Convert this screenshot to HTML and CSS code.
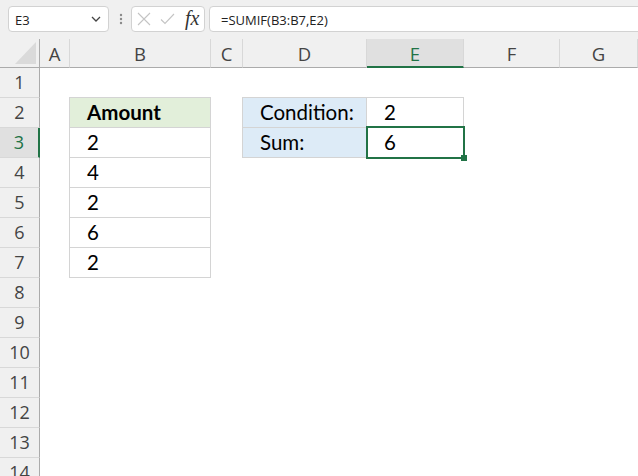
FILE: index.html
```html
<!DOCTYPE html>
<html>
<head>
<meta charset="utf-8">
<link rel="stylesheet" href="styles.css">
</head>
<body>
<div class="app">
  <div class="toolbar">
    <div class="namebox">
      <span class="name">E3</span>
      <svg class="chev" width="10" height="6" viewBox="0 0 10 6"><path d="M1 1 L5 5 L9 1" fill="none" stroke="#444" stroke-width="1.3"/></svg>
    </div>
    <svg class="dots" width="4" height="12" viewBox="0 0 4 12"><circle cx="2" cy="2" r="1.2" fill="#8a8a8a"/><circle cx="2" cy="6" r="1.2" fill="#8a8a8a"/><circle cx="2" cy="10" r="1.2" fill="#8a8a8a"/></svg>
    <div class="fxbox">
      <svg class="ico" width="14" height="14" viewBox="0 0 14 14"><path d="M1 1 L13 13 M13 1 L1 13" stroke="#c4c4c4" stroke-width="1.1" fill="none"/></svg>
      <svg class="ico" width="15" height="12" viewBox="0 0 15 12"><path d="M1 6.5 L5 10.5 L14 1" stroke="#c4c4c4" stroke-width="1.1" fill="none"/></svg>
      <span class="fx">fx</span>
    </div>
    <div class="formula">=SUMIF(B3:B7,E2)</div>
  </div>
  <div class="sheet">
    <div class="corner"><div class="tri"></div></div>
    <div class="colh">A</div>
    <div class="colh">B</div>
    <div class="colh">C</div>
    <div class="colh">D</div>
    <div class="colh sel">E</div>
    <div class="colh">F</div>
    <div class="colh">G</div>

    <div class="rowh r1">1</div>
    <div class="rowh r2">2</div>
    <div class="rowh r3 sel">3</div>
    <div class="rowh r4">4</div>
    <div class="rowh r5">5</div>
    <div class="rowh r6">6</div>
    <div class="rowh r7">7</div>
    <div class="rowh r8">8</div>
    <div class="rowh r9">9</div>
    <div class="rowh r10">10</div>
    <div class="rowh r11">11</div>
    <div class="rowh r12">12</div>
    <div class="rowh r13">13</div>
    <div class="rowh r14">14</div>

    <div class="tblB">
      <div class="cell head">Amount</div>
      <div class="cell">2</div>
      <div class="cell">4</div>
      <div class="cell">2</div>
      <div class="cell">6</div>
      <div class="cell">2</div>
    </div>

    <div class="tblD">
      <div class="cell label">Condition:</div>
      <div class="cell">2</div>
      <div class="cell label">Sum:</div>
      <div class="cell active">6<span class="selbox"></span><span class="handle"></span></div>
    </div>
  </div>
</div>
</body>
</html>
```

FILE: styles.css
```css
html, body {
  margin: 0;
  padding: 0;
  background: #ffffff;
  overflow: hidden;
}
.app {
  width: 638px;
  height: 476px;
  overflow: hidden;
}
.toolbar {
  height: 39px;
  background: #f0f0f0;
  display: flex;
  align-items: flex-start;
  padding: 6px 0 0 8px;
  box-sizing: border-box;
  font-family: "Open Sans", "Noto Sans", sans-serif;
  font-size: 13px;
  color: #222;
}
.namebox {
  width: 101px;
  height: 26px;
  box-sizing: border-box;
  background: #fff;
  border: 1px solid #d2d2d2;
  border-radius: 4px;
  display: flex;
  align-items: center;
  justify-content: space-between;
  padding: 1px 7px 0 6px;
}
.name { line-height: 22px; }
.chev { margin-top: -1px; }
.dots {
  margin: 7px 0 0 10px;
}
.fxbox {
  margin-left: 8px;
  width: 74px;
  height: 26px;
  box-sizing: border-box;
  background: #fff;
  border: 1px solid #d2d2d2;
  border-radius: 4px;
  display: flex;
  align-items: center;
  padding: 0 0 0 5px;
  gap: 9px;
}
.fx {
  font-family: "Liberation Serif", "DejaVu Serif", serif;
  font-style: italic;
  font-size: 20px;
  color: #333;
  margin-left: 1px;
  line-height: 20px;
  margin-top: -2px;
}
.formula {
  margin-left: 4px;
  flex: 1;
  margin-right: -10px;
  height: 26px;
  box-sizing: border-box;
  background: #fff;
  border: 1px solid #d2d2d2;
  border-radius: 4px 0 0 4px;
  padding: 1px 0 0 11px;
  line-height: 24px;
  white-space: nowrap;
}
.sheet {
  display: grid;
  grid-template-columns: 40px 30px 141px 32px 124px 97px 96px 1fr;
  grid-template-rows: 29px repeat(14, 30px);
}
.corner {
  background: #f0f0f0;
  border-right: 1px solid #ababab;
  border-bottom: 1px solid #ababab;
  position: relative;
}
.tri {
  position: absolute;
  right: 3px;
  bottom: 3px;
  width: 0;
  height: 0;
  border-left: 21px solid transparent;
  border-bottom: 22px solid #dadada;
}
.colh {
  background: #f0f0f0;
  border-right: 1px solid #d8d8d8;
  border-bottom: 1px solid #ababab;
  font-family: "Open Sans", "Noto Sans", sans-serif;
  font-size: 18.5px;
  color: #444;
  text-align: center;
  line-height: 26px;
  padding-top: 2px;
  box-sizing: border-box;
}
.colh.sel {
  background: #e0e0e0;
  border-bottom: 2px solid #217346;
  color: #217346;
}
.rowh {
  grid-column: 1;
  background: #f0f0f0;
  border-right: 1px solid #ababab;
  border-bottom: 1px solid #d8d8d8;
  font-family: "Open Sans", "Noto Sans", sans-serif;
  font-size: 18px;
  color: #444;
  text-align: center;
  line-height: 29px;
  box-sizing: border-box;
}
.rowh.sel {
  background: #e0e0e0;
  border-right: 2px solid #217346;
  color: #217346;
}
.tblB {
  grid-column: 3;
  grid-row: 3 / 9;
  margin: -1px 0 0 -1px;
  border-left: 1px solid #d4d4d4;
  border-top: 1px solid #d4d4d4;
  display: grid;
  grid-template-rows: repeat(6, 30px);
}
.tblD {
  grid-column: 5 / 7;
  grid-row: 3 / 5;
  margin: -1px 0 0 -1px;
  border-left: 1px solid #d4d4d4;
  border-top: 1px solid #d4d4d4;
  display: grid;
  grid-template-columns: 124px 97px;
  grid-template-rows: repeat(2, 30px);
}
.cell {
  border-right: 1px solid #d4d4d4;
  border-bottom: 1px solid #d4d4d4;
  box-sizing: border-box;
  font-family: Lato, "Open Sans", sans-serif;
  font-size: 20.5px;
  color: #000;
  line-height: 29px;
  padding-left: 17px;
  white-space: nowrap;
}
.cell.head {
  background: #e2efda;
  font-weight: bold;
}
.cell.label {
  background: #ddebf7;
}
.cell.active {
  position: relative;
}
.selbox {
  position: absolute;
  top: -2px;
  left: -1px;
  right: -2px;
  bottom: -2px;
  border: 2px solid #217346;
}
.handle {
  position: absolute;
  right: -4px;
  bottom: -4px;
  width: 6px;
  height: 6px;
  background: #217346;
}
```
